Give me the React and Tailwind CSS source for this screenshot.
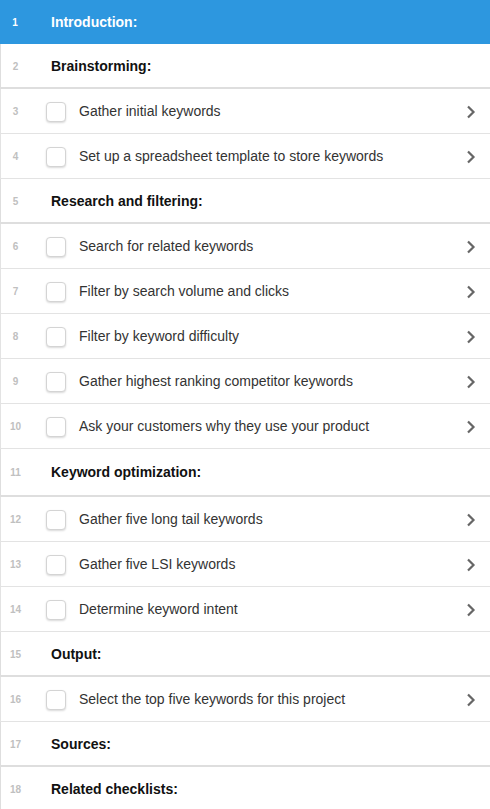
import React from "react";

const rows = [
  { type: "header", text: "Introduction:", active: true },
  { type: "header", text: "Brainstorming:" },
  { type: "item", text: "Gather initial keywords" },
  { type: "item", text: "Set up a spreadsheet template to store keywords" },
  { type: "header", text: "Research and filtering:" },
  { type: "item", text: "Search for related keywords" },
  { type: "item", text: "Filter by search volume and clicks" },
  { type: "item", text: "Filter by keyword difficulty" },
  { type: "item", text: "Gather highest ranking competitor keywords" },
  { type: "item", text: "Ask your customers why they use your product" },
  { type: "header", text: "Keyword optimization:", tall: true },
  { type: "item", text: "Gather five long tail keywords" },
  { type: "item", text: "Gather five LSI keywords" },
  { type: "item", text: "Determine keyword intent" },
  { type: "header", text: "Output:" },
  { type: "item", text: "Select the top five keywords for this project" },
  { type: "header", text: "Sources:" },
  { type: "header", text: "Related checklists:" },
];

function Chevron() {
  return (
    <svg width="10" height="14" viewBox="0 0 10 14" className="mr-[14px]">
      <path d="M2 1.5 L7.5 7 L2 12.5" fill="none" stroke="#666" strokeWidth="2.2" />
    </svg>
  );
}

export default function App() {
  return (
    <div
      className="w-[490px] min-h-[809px] bg-white"
      style={{ fontFamily: '"Liberation Sans", Arial, sans-serif' }}
    >
      {rows.map((row, i) => {
        if (row.active) {
          return (
            <div key={i} className="flex items-center h-[44px] bg-[#2d97df] text-white">
              <span className="w-[30px] text-center text-[10px] font-bold">{i + 1}</span>
              <span className="ml-[21px] text-[14px] font-bold">{row.text}</span>
            </div>
          );
        }
        if (row.type === "header") {
          return (
            <div
              key={i}
              className={
                "flex items-center border-l border-b-2 border-[#dedede] pt-px " +
                (row.tall ? "h-[48px]" : "h-[45px]")
              }
            >
              <span className="w-[29px] text-center text-[10px] font-bold text-[#c0c0c0]">{i + 1}</span>
              <span className="ml-[21px] text-[14px] font-bold text-[#111]">{row.text}</span>
            </div>
          );
        }
        return (
          <div
            key={i}
            className="flex items-center h-[45px] border-l border-b border-[#e3e3e3] pt-px"
          >
            <span className="w-[29px] text-center text-[10px] font-bold text-[#c0c0c0]">{i + 1}</span>
            <span className="ml-[16px] w-[20px] h-[20px] rounded-[4px] border border-[#d4d4d4] bg-white shadow-[0_1px_2px_rgba(0,0,0,0.15)]"></span>
            <span className="ml-[13px] flex-1 text-[14px] text-[#333]">{row.text}</span>
            <Chevron />
          </div>
        );
      })}
    </div>
  );
}
